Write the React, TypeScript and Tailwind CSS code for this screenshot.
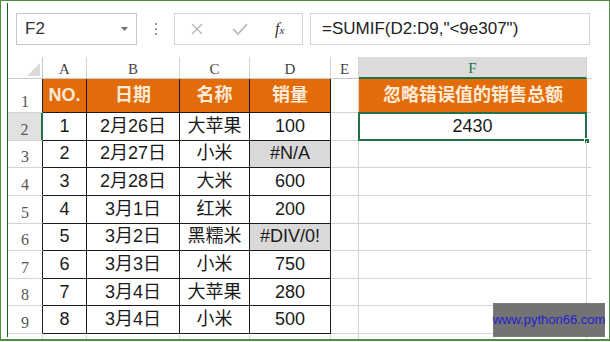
import React from "react";

const rows = [
  ["1", "2月26日", "大苹果", "100"],
  ["2", "2月27日", "小米", "#N/A"],
  ["3", "2月28日", "大米", "600"],
  ["4", "3月1日", "红米", "200"],
  ["5", "3月2日", "黑糯米", "#DIV/0!"],
  ["6", "3月3日", "小米", "750"],
  ["7", "3月4日", "大苹果", "280"],
  ["8", "3月4日", "小米", "500"],
];

const sans = "font-['Liberation_Sans','Noto_Sans_CJK_SC',sans-serif]";
const serif = "font-['Liberation_Serif',serif]";

function ColHead({ label, active }: { label: string; active?: boolean }) {
  return (
    <div
      className={`flex items-end justify-center pb-[1px] border-r border-[#d4d4d4] text-[15px] leading-none ${serif} ${
        active
          ? "bg-[#dcdcdc] text-[#217346] border-b-2 border-b-[#217346]"
          : "bg-white text-[#444] border-b border-b-[#c8c8c8]"
      }`}
    >
      {label}
    </div>
  );
}

function RowHead({ n, active }: { n: string; active?: boolean }) {
  return (
    <div
      className={`flex items-end justify-center pb-[2px] border-b border-[#d4d4d4] text-[16px] leading-none text-[#555] ${serif} ${
        active ? "bg-[#e1e1e1] border-r-2 border-r-[#217346]" : "bg-white border-r border-r-[#222]"
      }`}
    >
      {n}
    </div>
  );
}

export default function App() {
  return (
    <div className="relative w-[610px] h-[342px] bg-white overflow-hidden">
      <div className="h-[341px] border border-b-2 border-[#4b8f3f] flex">
        <div className="w-[6px]" />
        <div className="w-[1px] my-[2px] bg-[#1f5a1f]" />
        <div className="flex-1 flex flex-col">
          {/* formula bar */}
          <div className="mt-[12px] h-[32px] flex items-stretch">
            <div className="ml-[8px] w-[121px] border border-[#c6c6c6] flex items-center justify-between pl-[8px] pr-[8px]">
              <span className={`text-[17px] text-[#333] ${sans}`}>F2</span>
              <svg width="7" height="4" viewBox="0 0 7 4">
                <path d="M0 0 L7 0 L3.5 4 Z" fill="#6f6f6f" />
              </svg>
            </div>
            <div className="w-[37px] flex flex-col items-center justify-center gap-[3px]">
              <div className="w-[2px] h-[2px] bg-[#9a9a9a]" />
              <div className="w-[2px] h-[2px] bg-[#9a9a9a]" />
              <div className="w-[2px] h-[2px] bg-[#9a9a9a]" />
            </div>
            <div className="w-[129px] border border-[#d4d4d4] flex items-center">
              <svg width="14" height="14" viewBox="0 0 14 14" className="ml-[15px]">
                <path d="M2 2 L12 12 M12 2 L2 12" stroke="#b5b5b5" strokeWidth="1.4" />
              </svg>
              <svg width="16" height="14" viewBox="0 0 16 14" className="ml-[28px]">
                <path d="M1 7 L6 12 L15 2" stroke="#b5b5b5" strokeWidth="1.6" fill="none" />
              </svg>
              <span className={`ml-[27px] italic text-[16px] text-[#333] ${serif}`}>
                f<span className="text-[11px]">x</span>
              </span>
            </div>
            <div className="ml-[7px] w-[280px] border border-[#d4d4d4] flex items-center pl-[11px]">
              <span className={`text-[17px] text-[#222] ${sans}`}>=SUMIF(D2:D9,"&lt;9e307")</span>
            </div>
          </div>

          {/* sheet */}
          <div className="mt-[12px] flex-1 grid grid-cols-[35px_44px_93px_70px_81px_28px_228px_4px_1fr] grid-rows-[22px_34px_repeat(8,27.625px)_1fr]">
            {/* column header row */}
            <div className="relative bg-white border-r border-b border-[#c8c8c8]">
              <svg width="13" height="13" viewBox="0 0 13 13" className="absolute right-[2px] bottom-[2px]">
                <path d="M13 0 L13 13 L0 13 Z" fill="#dadada" />
              </svg>
            </div>
            <ColHead label="A" />
            <ColHead label="B" />
            <ColHead label="C" />
            <ColHead label="D" />
            <ColHead label="E" />
            <ColHead label="F" active />
            <div className="border-b border-[#c8c8c8]" />
            <div />

            {/* row 1 */}
            <RowHead n="1" />
            {["NO.", "日期", "名称", "销量"].map((h) => (
              <div
                key={h}
                className={`bg-[#e36c0a] border-r border-b border-[#1a1a1a] flex items-center justify-center text-[18px] font-bold text-[#fdebd8] ${sans}`}
              >
                {h}
              </div>
            ))}
            <div className="border-r border-b border-[#d4d4d4]" />
            <div
              className={`bg-[#e36c0a] border-b border-[#1a1a1a] flex items-center justify-center text-[18px] font-bold text-[#fdebd8] ${sans}`}
            >
              忽略错误值的销售总额
            </div>
            <div className="border-b border-[#d4d4d4]" />
            <div />

            {/* data rows */}
            {rows.map((r, i) => (
              <React.Fragment key={i}>
                <RowHead n={String(i + 2)} active={i === 0} />
                {r.map((v, j) => (
                  <div
                    key={j}
                    className={`border-r border-b border-[#1a1a1a] flex items-center justify-center text-[18px] text-[#1a1a1a] ${sans} ${
                      v.startsWith("#") ? "bg-[#d9d9d9]" : "bg-white"
                    }`}
                  >
                    {v}
                  </div>
                ))}
                <div className="border-r border-b border-[#d4d4d4]" />
                <div
                  className={`relative border-r border-b border-[#d4d4d4] flex items-center justify-center text-[18px] text-[#1a1a1a] ${sans}`}
                >
                  {i === 0 && (
                    <>
                      2430
                      <div className="absolute -left-[1px] -top-[1px] -right-[1px] -bottom-[1px] border-2 border-[#217346]" />
                      <div className="absolute -right-[4px] -bottom-[4px] w-[6px] h-[6px] bg-[#217346] border border-white" />
                    </>
                  )}
                </div>
                <div className="border-b border-[#d4d4d4]" />
                <div />
              </React.Fragment>
            ))}

            {/* partial row */}
            <div className="border-r border-[#d4d4d4]" />
            <div className="border-r border-[#d4d4d4]" />
            <div className="border-r border-[#d4d4d4]" />
            <div className="border-r border-[#d4d4d4]" />
            <div className="border-r border-[#d4d4d4]" />
            <div className="border-r border-[#d4d4d4]" />
            <div className="border-r border-[#d4d4d4]" />
            <div />
            <div />
          </div>
        </div>
      </div>

      {/* site label */}
      <div className="absolute left-[493px] top-[303px] w-[112px] h-[34px] bg-neutral-500 border border-[#7a7a7a] flex items-center justify-center">
        <span className={`text-[13px] text-[#2222cc] ${sans}`}>www.python66.com</span>
      </div>
    </div>
  );
}
